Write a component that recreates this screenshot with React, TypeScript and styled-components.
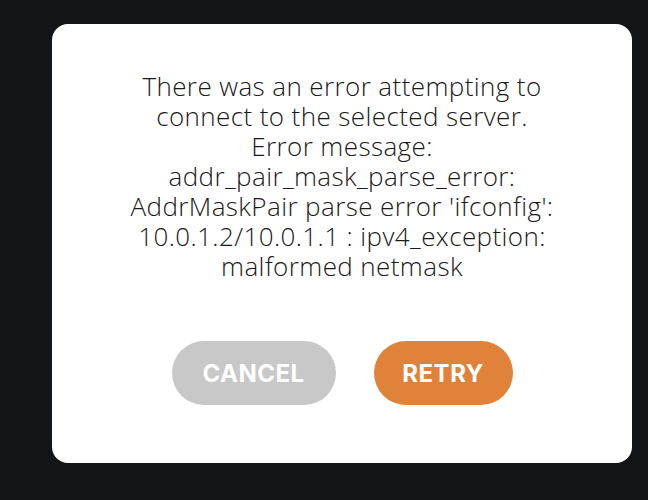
import React from "react";
import styled, { createGlobalStyle } from "styled-components";

const GlobalStyle = createGlobalStyle`
  html, body {
    margin: 0;
    padding: 0;
    background: #111517;
  }
  * { box-sizing: border-box; }
`;

const Page = styled.div`
  width: 648px;
  height: 500px;
  background: #111517;
  padding: 24px 16px 0 52px;
  display: flex;
  align-items: flex-start;
`;

const Dialog = styled.div`
  width: 580px;
  height: 439px;
  background: #ffffff;
  border-radius: 16px;
  display: flex;
  flex-direction: column;
  align-items: center;
  padding-top: 47px;
`;

const Message = styled.p`
  margin: 0;
  width: 500px;
  text-align: center;
  font-family: "Open Sans", "Lato", sans-serif;
  font-weight: 300;
  font-size: 26px;
  line-height: 30px;
  letter-spacing: 0.4px;
  color: #1a1a1a;
`;

const Actions = styled.div`
  display: flex;
  gap: 38px;
  margin-top: 60px;
`;

const Button = styled.button<{ $variant: "cancel" | "retry" }>`
  height: 64px;
  width: ${(p) => (p.$variant === "cancel" ? "164px" : "139px")};
  border: none;
  border-radius: 32px;
  background: ${(p) => (p.$variant === "cancel" ? "#c8c8c8" : "#e0823a")};
  color: #ffffff;
  font-family: "Inter", "Liberation Sans", sans-serif;
  font-weight: 700;
  font-size: 24px;
  letter-spacing: 0.5px;
  cursor: pointer;
  padding: 0;
`;

const lines = [
  "There was an error attempting to",
  "connect to the selected server.",
  "Error message:",
  "addr_pair_mask_parse_error:",
  "AddrMaskPair parse error 'ifconfig':",
  "10.0.1.2/10.0.1.1 : ipv4_exception:",
  "malformed netmask",
];

export default function App() {
  return (
    <>
      <GlobalStyle />
      <Page>
        <Dialog>
          <Message>
            {lines.map((l, i) => (
              <React.Fragment key={i}>
                {i > 0 && <br />}
                {l}
              </React.Fragment>
            ))}
          </Message>
          <Actions>
            <Button $variant="cancel">CANCEL</Button>
            <Button $variant="retry">RETRY</Button>
          </Actions>
        </Dialog>
      </Page>
    </>
  );
}
